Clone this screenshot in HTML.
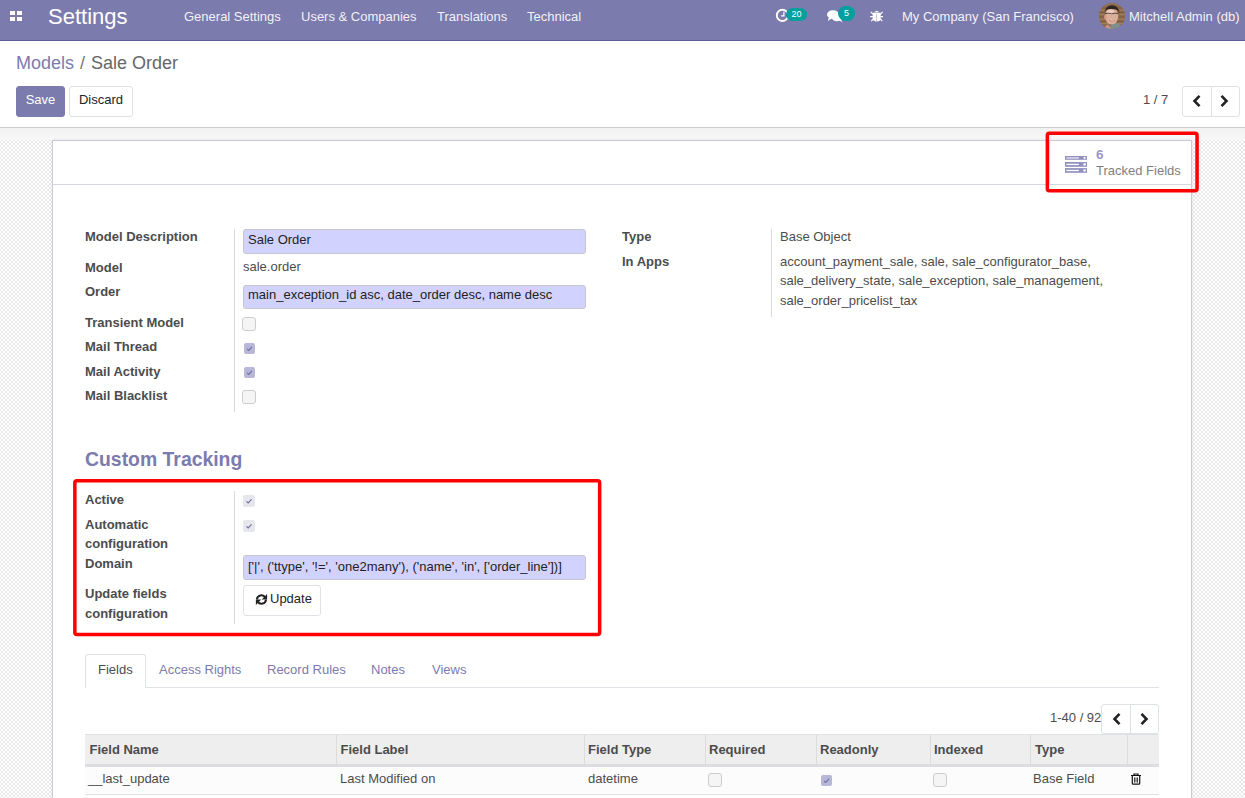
<!DOCTYPE html>
<html><head><meta charset="utf-8">
<style>
*{box-sizing:border-box;margin:0;padding:0}
html,body{width:1245px;height:798px;overflow:hidden;background:#fff}
body{position:relative;font-family:"Liberation Sans",sans-serif;font-size:13px;line-height:19.5px;color:#4c4c4c}
.a{position:absolute;white-space:nowrap}
.t{position:absolute;white-space:nowrap;line-height:20px}
#nav{position:absolute;left:0;top:0;width:1245px;height:41px;background:#7C7BAD;border-bottom:1px solid #5d5c95}
.nv{position:absolute;top:7px;color:rgba(255,255,255,.92);line-height:20px}
#cp{position:absolute;left:0;top:41px;width:1245px;height:87px;background:#fff;border-bottom:1px solid #cdcdcd}
#bg{position:absolute;left:0;top:128px;width:1245px;height:670px;
 background-image:conic-gradient(#e9e9e9 25%,#fff 0 50%,#e9e9e9 0 75%,#fff 0);background-size:4px 4px;background-position:1px 1px}
#band{position:absolute;left:0;top:128px;width:1245px;height:12px;background:linear-gradient(#f1f1f1,#f7f7f7)}
#sheet{position:absolute;left:52px;top:140px;width:1140px;height:700px;background:#fff;border:1px solid #c9c9da;box-shadow:0 0 3px rgba(0,0,0,.08)}
.lbl{position:absolute;white-space:nowrap;font-weight:bold;color:#4c4c4c;line-height:20px}
.vsep{position:absolute;width:1px;background:#d9d9d9}
.inp{position:absolute;background:#d2d2ff;border:1px solid #c6c6cc;border-radius:3px;color:#222;line-height:20px;padding-left:4px}
.btn{position:absolute;border:1px solid #dee2e6;border-radius:3px;background:#fff;color:#212529}
.cb{position:absolute;width:14px;height:14px;border:1px solid #cdcdcd;border-radius:3px;background:#f5f5f5}
.cbc{position:absolute;width:11px;height:11px;border-radius:2px;background:#b8b7d8}
.cbg{position:absolute;width:12px;height:12px;border-radius:2px;background:#e6e7ec}
.red{position:absolute;border:3px solid #ff0000;border-radius:3px}
.tab{position:absolute;color:#7C7BAD;line-height:20px}
</style></head><body>

<div id="nav">
  <div class="a" style="left:10px;top:11px;width:5px;height:4.3px;background:#fff"></div>
  <div class="a" style="left:16.8px;top:11px;width:5.2px;height:4.3px;background:#fff"></div>
  <div class="a" style="left:10px;top:16.6px;width:5px;height:4.4px;background:#fff"></div>
  <div class="a" style="left:16.8px;top:16.6px;width:5.2px;height:4.4px;background:#fff"></div>
  <div class="a" style="left:48px;top:2px;font-size:22px;line-height:30px;color:#fff">Settings</div>
  <div class="nv" style="left:184px">General Settings</div>
  <div class="nv" style="left:301px">Users &amp; Companies</div>
  <div class="nv" style="left:437px">Translations</div>
  <div class="nv" style="left:527px">Technical</div>

  <svg class="a" style="left:774px;top:7px" width="16" height="17" viewBox="0 0 16 17">
    <circle cx="8.4" cy="8.4" r="5.6" fill="none" stroke="#fff" stroke-width="1.9"/>
    <path d="M9.9 4.8 V8.9 H7.1" fill="none" stroke="#fff" stroke-width="1.2"/>
  </svg>
  <div class="a" style="left:786px;top:8px;width:21px;height:13px;border-radius:7px;background:#00A09D;color:#fff;font-size:9px;line-height:12px;text-align:center">20</div>
  <svg class="a" style="left:826px;top:8px" width="18" height="16" viewBox="0 0 18 16">
    <ellipse cx="7" cy="6.5" rx="6" ry="4.3" fill="#fff"/>
    <path d="M3 9 L1.8 13 L6.5 10 Z" fill="#fff"/>
    <ellipse cx="11" cy="10" rx="5" ry="3.3" fill="#fff"/>
    <path d="M13 12 L16.5 14.5 L14.5 10.5 Z" fill="#fff"/>
  </svg>
  <div class="a" style="left:838px;top:6px;width:17px;height:15px;border-radius:8px;background:#00A09D;color:#fff;font-size:9px;line-height:14px;text-align:center">5</div>
  <svg class="a" style="left:869px;top:9px" width="14" height="14" viewBox="0 0 14 14">
    <path d="M5.2 3.2 Q7.75 0.2 10.3 3.2 Z" fill="#fff"/>
    <path d="M3.8 3.8 H11.7 V9.6 Q11.7 12.6 7.75 12.6 Q3.8 12.6 3.8 9.6 Z" fill="#fff"/>
    <rect x="7.45" y="5" width="0.6" height="7.4" fill="#9d9cc4"/>
    <path d="M1.8 2.8 L4.2 5.4 M13.7 2.8 L11.3 5.4 M1.2 7.6 H4 M14.3 7.6 H11.5 M2.3 12.2 L4.3 9.8 M13.2 12.2 L11.2 9.8" stroke="#fff" stroke-width="1.2"/>
  </svg>
  <svg class="a" style="left:1099px;top:3px" width="26" height="26" viewBox="0 0 26 26">
    <defs><clipPath id="av"><circle cx="13" cy="13" r="13"/></clipPath>
    <filter id="bl" x="-10%" y="-10%" width="120%" height="120%"><feGaussianBlur stdDeviation=".45"/></filter></defs>
    <g clip-path="url(#av)">
      <rect width="26" height="26" fill="#8e6c4c"/>
      <g filter="url(#bl)">
      <path d="M0 5 H26 M0 9.5 H26 M0 14 H26 M0 18.5 H26 M0 23 H26" stroke="#6a4e38" stroke-width="1" opacity=".55"/>
      <path d="M0 7 H26 M0 11.5 H26 M0 16 H26 M0 20.5 H26" stroke="#b08a62" stroke-width=".8" opacity=".7"/>
      <path d="M9 26 Q12 20.5 17 20 Q22 20.5 24 26 Z" fill="#7f8e8c"/>
      <path d="M5 26 Q6 22 9.5 21.5 L12 26 Z" fill="#c99580"/>
      <ellipse cx="12.6" cy="13.2" rx="6.6" ry="8.4" fill="#dcae98"/>
      <ellipse cx="6.4" cy="14" rx="1.3" ry="2.2" fill="#d49a86"/>
      <ellipse cx="11.5" cy="9" rx="3.5" ry="2.5" fill="#f0d4c8" opacity=".8"/>
      <path d="M5.4 9.5 Q6.5 2.4 13 2.2 Q19.5 2.5 20.6 10 Q19.5 7 17 6.4 Q13 5.6 9 6.2 Q6.5 7 5.4 9.5Z" fill="#2e2622"/>
      <path d="M6 10.8 Q9 9.6 12.5 10.8 Q16 9.6 19.5 10.8" fill="none" stroke="#4a3a36" stroke-width=".9"/>
      <path d="M10 16.5 Q13 18.8 16.2 16.4 Q13 17.5 10 16.5Z" fill="#fff"/>
      <path d="M10 17.2 Q13 19.2 16 17.2" fill="none" stroke="#a86050" stroke-width=".6"/>
      </g>
    </g>
  </svg>
  <div class="nv" style="left:902px">My Company (San Francisco)</div>
  <div class="nv" style="left:1129px">Mitchell Admin (db)</div>
</div>

<div id="cp">
  <div class="a" style="left:16px;top:9px;font-size:18px;line-height:27px;color:#7C7BAD">Models</div><div class="a" style="left:80px;top:9px;font-size:18px;line-height:27px;color:#777">/</div><div class="a" style="left:91px;top:9px;font-size:18px;line-height:27px;color:#666">Sale Order</div>
  <div class="btn" style="left:16px;top:45px;width:49px;height:31px;background:#7C7BAD;border-color:#7C7BAD;color:#fff;text-align:center;line-height:26px">Save</div>
  <div class="btn" style="left:69px;top:45px;width:64px;height:31px;text-align:center;line-height:26px">Discard</div>
  <div class="a" style="left:1143px;top:49px;line-height:20px;color:#4c4c4c">1 / 7</div>
  <div class="btn" style="left:1182px;top:45px;width:58px;height:31px"></div>
  <div class="a" style="left:1211px;top:46px;width:1px;height:29px;background:#dee2e6"></div>
  <svg class="a" style="left:1191px;top:53px" width="12" height="14" viewBox="0 0 12 14"><path d="M8.5 1.8 L3.5 7 L8.5 12.2" fill="none" stroke="#222" stroke-width="2.6"/></svg>
  <svg class="a" style="left:1218px;top:53px" width="12" height="14" viewBox="0 0 12 14"><path d="M3.5 1.8 L8.5 7 L3.5 12.2" fill="none" stroke="#222" stroke-width="2.6"/></svg>
</div>

<div id="bg"></div>
<div id="band"></div>
<div id="sheet"></div>

<!-- button box -->
<div class="a" style="left:53px;top:184px;width:1138px;height:1px;background:#d6d6e2"></div>
<div class="a" style="left:1049px;top:141px;width:1px;height:43px;background:#e2e2ea"></div>
<svg class="a" style="left:1065px;top:155px" width="22" height="18" viewBox="0 0 22 18">
  <g fill="#9190c0">
    <rect x="0" y="1" width="22" height="3.8"/>
    <rect x="0" y="7" width="22" height="4.8"/>
    <rect x="0" y="13.1" width="22" height="4.7"/>
  </g>
  <g fill="#fff">
    <rect x="1.4" y="2.3" width="12.5" height="1.3" opacity=".8"/>
    <rect x="1.4" y="8.75" width="12.5" height="1.3"/>
    <rect x="1.4" y="14.85" width="12.5" height="1.3"/>
    <circle cx="19.6" cy="2.9" r="1.1"/>
    <circle cx="19.6" cy="9.4" r="1.3"/>
    <circle cx="19.6" cy="15.5" r="1.3"/>
  </g>
</svg>
<div class="a" style="left:1096px;top:145px;font-weight:bold;color:#9998c6;line-height:20px;font-size:13.5px">6</div>
<div class="a" style="left:1096px;top:160.5px;color:#808080;line-height:20px">Tracked Fields</div>

<!-- left group -->
<div class="lbl" style="left:85px;top:226.5px">Model Description</div>
<div class="lbl" style="left:85px;top:257.8px">Model</div>
<div class="lbl" style="left:85px;top:282px">Order</div>
<div class="lbl" style="left:85px;top:312.6px">Transient Model</div>
<div class="lbl" style="left:85px;top:336.9px">Mail Thread</div>
<div class="lbl" style="left:85px;top:361.8px">Mail Activity</div>
<div class="lbl" style="left:85px;top:385.6px">Mail Blacklist</div>
<div class="vsep" style="left:234px;top:229px;height:183px"></div>
<div class="inp" style="left:243px;top:229px;width:343px;height:25px;line-height:19px">Sale Order</div>
<div class="a" style="left:243px;top:257.2px;line-height:20px">sale.order</div>
<div class="inp" style="left:243px;top:285px;width:343px;height:24px;line-height:18px">main_exception_id asc, date_order desc, name desc</div>
<div class="cb" style="left:242px;top:317px;width:14px;height:14px"></div>
<div class="cbc" style="left:243.5px;top:342.5px"><svg width="11" height="11" viewBox="0 0 11 11" style="position:absolute;left:0;top:0"><path d="M3 5.8 L4.7 7.4 L8 3.8" fill="none" stroke="#6f6ea0" stroke-width="1.1"/></svg></div>
<div class="cbc" style="left:243.5px;top:367px"><svg width="11" height="11" viewBox="0 0 11 11" style="position:absolute;left:0;top:0"><path d="M3 5.8 L4.7 7.4 L8 3.8" fill="none" stroke="#6f6ea0" stroke-width="1.1"/></svg></div>
<div class="cb" style="left:242px;top:390px;width:14px;height:14px"></div>

<!-- right group -->
<div class="lbl" style="left:622px;top:226.8px">Type</div>
<div class="lbl" style="left:622px;top:252.4px">In Apps</div>
<div class="vsep" style="left:771px;top:229px;height:88px"></div>
<div class="a" style="left:780px;top:226.5px;line-height:20px">Base Object</div>
<div class="a" style="left:780px;top:251.75px;line-height:19.5px;white-space:normal;width:380px">account_payment_sale, sale, sale_configurator_base,<br>sale_delivery_state, sale_exception, sale_management,<br>sale_order_pricelist_tax</div>

<!-- custom tracking -->
<div class="a" style="left:85px;top:444.9px;font-size:19.4px;line-height:29px;font-weight:bold;color:#7C7BAD">Custom Tracking</div>
<div class="lbl" style="left:85px;top:489.8px">Active</div>
<div class="lbl" style="left:85px;top:514.5px;line-height:19px">Automatic<br>configuration</div>
<div class="lbl" style="left:85px;top:554.3px">Domain</div>
<div class="lbl" style="left:85px;top:583.5px;line-height:20px">Update fields<br>configuration</div>
<div class="vsep" style="left:234px;top:491px;height:133px"></div>
<div class="cbg" style="left:243px;top:495px"><svg width="12" height="12" viewBox="0 0 12 12" style="position:absolute;left:0;top:0"><path d="M3.5 6.3 L5.2 7.9 L8.5 4.3" fill="none" stroke="#6f6ea0" stroke-width="1.1"/></svg></div>
<div class="cbg" style="left:243px;top:520px"><svg width="12" height="12" viewBox="0 0 12 12" style="position:absolute;left:0;top:0"><path d="M3.5 6.3 L5.2 7.9 L8.5 4.3" fill="none" stroke="#6f6ea0" stroke-width="1.1"/></svg></div>
<div class="inp" style="left:243px;top:555px;width:343px;height:25px;line-height:21px">['|', ('ttype', '!=', 'one2many'), ('name', 'in', ['order_line'])]</div>
<div class="btn" style="left:243px;top:585px;width:78px;height:31px"></div>
<svg class="a" style="left:255px;top:593px" width="13" height="13" viewBox="0 0 13 13">
  <path d="M1.9 6.4 A4.5 4.5 0 0 1 10.2 4.4" fill="none" stroke="#222" stroke-width="2"/>
  <path d="M12.1 1.1 V6.4 H6.8 Z" fill="#222"/>
  <path d="M11 6.6 A4.5 4.5 0 0 1 2.7 8.6" fill="none" stroke="#222" stroke-width="2"/>
  <path d="M0.9 11.9 V6.6 H6.2 Z" fill="#222"/>
</svg>
<div class="a" style="left:270px;top:588.8px;line-height:20px;color:#212529">Update</div>

<svg class="a" style="left:0;top:0" width="1245" height="798" viewBox="0 0 1245 798">
  <rect x="1047.35" y="133.15" width="149.7" height="57.6" rx="2" fill="none" stroke="#ff0000" stroke-width="3.5"/>
  <rect x="74.85" y="480.85" width="524.8" height="153.7" rx="2" fill="none" stroke="#ff0000" stroke-width="3.5"/>
</svg>

<!-- tabs -->
<div class="a" style="left:85px;top:687px;width:1074px;height:1px;background:#dee2e6"></div>
<div class="a" style="left:85px;top:654px;width:61px;height:34px;background:#fff;border:1px solid #dee2e6;border-bottom:none;border-radius:3px 3px 0 0"></div>
<div class="tab" style="left:98px;top:660px;color:#4c4c4c">Fields</div>
<div class="tab" style="left:159px;top:660px">Access Rights</div>
<div class="tab" style="left:267px;top:660px">Record Rules</div>
<div class="tab" style="left:371px;top:660px">Notes</div>
<div class="tab" style="left:432px;top:660px">Views</div>

<!-- list pager -->
<div class="a" style="left:1050px;top:708px;line-height:20px">1-40 / 92</div>
<div class="btn" style="left:1101px;top:704px;width:58px;height:30px"></div>
<div class="a" style="left:1130px;top:705px;width:1px;height:28px;background:#dee2e6"></div>
<svg class="a" style="left:1111px;top:712px" width="12" height="14" viewBox="0 0 12 14"><path d="M8.5 1.8 L3.5 7 L8.5 12.2" fill="none" stroke="#222" stroke-width="2.6"/></svg>
<svg class="a" style="left:1138px;top:712px" width="12" height="14" viewBox="0 0 12 14"><path d="M3.5 1.8 L8.5 7 L3.5 12.2" fill="none" stroke="#222" stroke-width="2.6"/></svg>

<!-- table -->
<div class="a" style="left:85px;top:734px;width:1074px;height:30px;background:#eeeeee;border-top:1px solid #dee2e6"></div>
<div class="a" style="left:85px;top:764px;width:1074px;height:3px;background:#dcdde0"></div>
<div class="a" style="left:85px;top:767px;width:1074px;height:27px;background:#fcfcfc"></div>
<div class="a" style="left:85px;top:794px;width:1074px;height:1px;background:#dee2e6"></div>
<div class="vsep" style="left:336px;top:735px;height:29px;background:#dcdcdc"></div>
<div class="vsep" style="left:584px;top:735px;height:29px;background:#dcdcdc"></div>
<div class="vsep" style="left:705px;top:735px;height:29px;background:#dcdcdc"></div>
<div class="vsep" style="left:816px;top:735px;height:29px;background:#dcdcdc"></div>
<div class="vsep" style="left:930px;top:735px;height:29px;background:#dcdcdc"></div>
<div class="vsep" style="left:1030px;top:735px;height:29px;background:#dcdcdc"></div>
<div class="vsep" style="left:1127px;top:735px;height:29px;background:#dcdcdc"></div>
<div class="lbl" style="left:89.5px;top:739.8px">Field Name</div>
<div class="lbl" style="left:340.5px;top:739.8px">Field Label</div>
<div class="lbl" style="left:588px;top:739.8px">Field Type</div>
<div class="lbl" style="left:709px;top:739.8px">Required</div>
<div class="lbl" style="left:820px;top:739.8px">Readonly</div>
<div class="lbl" style="left:934px;top:739.8px">Indexed</div>
<div class="lbl" style="left:1035px;top:739.8px">Type</div>
<div class="a" style="left:88px;top:769px;line-height:20px">__last_update</div>
<div class="a" style="left:340px;top:769px;line-height:20px">Last Modified on</div>
<div class="a" style="left:588px;top:769px;line-height:20px">datetime</div>
<div class="a" style="left:1033px;top:769px;line-height:20px">Base Field</div>
<div class="cb" style="left:708px;top:773px"></div>
<div class="cbc" style="left:820.5px;top:774.5px"><svg width="11" height="11" viewBox="0 0 11 11" style="position:absolute;left:0;top:0"><path d="M3 5.8 L4.7 7.4 L8 3.8" fill="none" stroke="#6f6ea0" stroke-width="1.1"/></svg></div>
<div class="cb" style="left:933px;top:773px"></div>
<svg class="a" style="left:1130px;top:773px" width="12" height="12" viewBox="0 0 12 12">
  <path d="M1 2.5 H11 M4 2.3 V1 H8 V2.3" fill="none" stroke="#111" stroke-width="1.2"/>
  <path d="M2.3 3 V10.2 Q2.3 11.2 3.3 11.2 H8.7 Q9.7 11.2 9.7 10.2 V3" fill="none" stroke="#111" stroke-width="1.2"/>
  <path d="M4.5 4.5 V9.5 M6 4.5 V9.5 M7.5 4.5 V9.5" stroke="#111" stroke-width=".8"/>
</svg>

</body></html>
